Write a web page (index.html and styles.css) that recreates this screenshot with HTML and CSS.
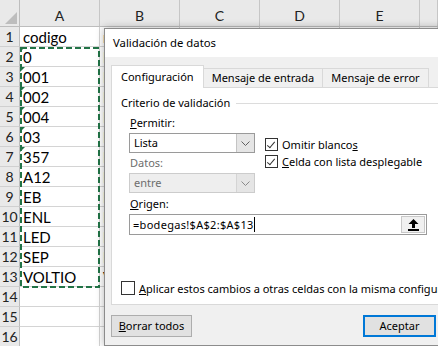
FILE: index.html
```html
<!DOCTYPE html>
<html lang="es">
<head>
    <meta charset="UTF-8">
    <title>Validación de datos</title>
    <link rel="stylesheet" href="styles.css">
</head>
<body>
    <div class="sheet">
        <div class="row head">
            <div class="rh corner">
                <svg width="20" height="27" viewBox="0 0 20 27"><polygon points="17,12 17,24 5,24" fill="#bdbdbd"/></svg>
            </div>
            <div class="ch">A</div>
            <div class="ch">B</div>
            <div class="ch">C</div>
            <div class="ch">D</div>
            <div class="ch">E</div>
            <div class="ch last"></div>
        </div>
        <div class="row"><div class="rh">1</div><div class="cell">codigo</div><div class="cell">nombre</div><div class="cell"></div><div class="cell"></div><div class="cell"></div><div class="cell last"></div></div>
        <div class="row"><div class="rh">2</div><div class="cell num">0</div><div class="cell">BODEGA GENERAL</div><div class="cell"></div><div class="cell"></div><div class="cell"></div><div class="cell last"></div></div>
        <div class="row"><div class="rh">3</div><div class="cell num">001</div><div class="cell">BODEGA 1</div><div class="cell"></div><div class="cell"></div><div class="cell"></div><div class="cell last"></div></div>
        <div class="row"><div class="rh">4</div><div class="cell num">002</div><div class="cell">BODEGA 2</div><div class="cell"></div><div class="cell"></div><div class="cell"></div><div class="cell last"></div></div>
        <div class="row"><div class="rh">5</div><div class="cell num">004</div><div class="cell">BODEGA 4</div><div class="cell"></div><div class="cell"></div><div class="cell"></div><div class="cell last"></div></div>
        <div class="row"><div class="rh">6</div><div class="cell num">03</div><div class="cell">BODEGA 3</div><div class="cell"></div><div class="cell"></div><div class="cell"></div><div class="cell last"></div></div>
        <div class="row"><div class="rh">7</div><div class="cell num">357</div><div class="cell">INVENTARIO</div><div class="cell"></div><div class="cell"></div><div class="cell"></div><div class="cell last"></div></div>
        <div class="row"><div class="rh">8</div><div class="cell">A12</div><div class="cell">LOCAL A12</div><div class="cell"></div><div class="cell"></div><div class="cell"></div><div class="cell last"></div></div>
        <div class="row"><div class="rh">9</div><div class="cell">EB</div><div class="cell">PLANTA EB</div><div class="cell"></div><div class="cell"></div><div class="cell"></div><div class="cell last"></div></div>
        <div class="row"><div class="rh">10</div><div class="cell">ENL</div><div class="cell">INTERNA ENL</div><div class="cell"></div><div class="cell"></div><div class="cell"></div><div class="cell last"></div></div>
        <div class="row"><div class="rh">11</div><div class="cell">LED</div><div class="cell">LED</div><div class="cell"></div><div class="cell"></div><div class="cell"></div><div class="cell last"></div></div>
        <div class="row"><div class="rh">12</div><div class="cell">SEP</div><div class="cell">DEVOLUCIONES</div><div class="cell"></div><div class="cell"></div><div class="cell"></div><div class="cell last"></div></div>
        <div class="row"><div class="rh">13</div><div class="cell">VOLTIO</div><div class="cell">VOLTIO</div><div class="cell"></div><div class="cell"></div><div class="cell"></div><div class="cell last"></div></div>
        <div class="row"><div class="rh">14</div><div class="cell"></div><div class="cell"></div><div class="cell"></div><div class="cell"></div><div class="cell"></div><div class="cell last"></div></div>
        <div class="row"><div class="rh">15</div><div class="cell"></div><div class="cell"></div><div class="cell"></div><div class="cell"></div><div class="cell"></div><div class="cell last"></div></div>
        <div class="row"><div class="rh">16</div><div class="cell"></div><div class="cell"></div><div class="cell"></div><div class="cell"></div><div class="cell"></div><div class="cell last"></div></div>

        <!-- copy marquee around A2:A13 -->
        <svg class="marquee" width="80" height="241" viewBox="0 0 80 241">
            <rect x="1" y="1" width="78" height="239" fill="none" stroke="#217346" stroke-width="2" stroke-dasharray="6 3"/>
        </svg>

        <div class="dialog">
            <div class="title">Validación de datos</div>
            <div class="body">
                <div class="tabs">
                    <div class="tab active">Configuración</div>
                    <div class="tab">Mensaje de entrada</div>
                    <div class="tab">Mensaje de error</div>
                </div>
                <div class="panel">
                    <div class="group-title"><span>Criterio de validación</span></div>
                    <div class="criteria">
                        <div class="fields">
                            <div class="label"><u>P</u>ermitir:</div>
                            <div class="select">
                                <div class="value">Lista</div>
                                <div class="arrow"><svg width="9" height="5" viewBox="0 0 9 5"><polyline points="0.5,0.5 4.5,4.5 8.5,0.5" fill="none" stroke="#606060"/></svg></div>
                            </div>
                            <div class="label disabled">Datos:</div>
                            <div class="select disabled">
                                <div class="value">entre</div>
                                <div class="arrow"><svg width="9" height="5" viewBox="0 0 9 5"><polyline points="0.5,0.5 4.5,4.5 8.5,0.5" fill="none" stroke="#8a8a8a"/></svg></div>
                            </div>
                        </div>
                        <div class="checks">
                            <div class="check"><span class="box checked"></span>Omitir blanco<u>s</u></div>
                            <div class="check"><span class="box checked"></span><u>C</u>elda con lista desplegable</div>
                        </div>
                    </div>
                    <div class="label origin"><u>O</u>rigen:</div>
                    <div class="source">
                        <div class="text">=bodegas!$A$2:$A$13<span class="caret"></span></div>
                        <div class="pick">
                            <svg width="11" height="12" viewBox="0 0 11 12">
                                <polygon points="5.5,0 10.5,5 7,5 7,9 4,9 4,5 0.5,5" fill="#000"/>
                                <rect x="0" y="10" width="11" height="2" fill="#000"/>
                            </svg>
                        </div>
                    </div>
                    <div class="check apply"><span class="box big"></span><u>A</u>plicar estos cambios a otras celdas con la misma configuración</div>
                </div>
                <div class="buttons">
                    <div class="btn"><u>B</u>orrar todos</div>
                    <div class="right">
                        <div class="btn default">Aceptar</div>
                        <div class="btn">Cancelar</div>
                    </div>
                </div>
            </div>
        </div>
    </div>
</body>
</html>
```

FILE: styles.css
```css
body {
    margin: 0;
    width: 438px;
    height: 346px;
    overflow: hidden;
    background: #fff;
}
.sheet {
    position: relative;
    font-family: Lato, 'Liberation Sans', sans-serif;
    font-size: 15px;
    color: #000;
}
.row {
    display: flex;
    height: 20px;
}
.row.head {
    height: 27px;
}
.rh {
    width: 20px;
    flex: none;
    box-sizing: border-box;
    background: #e9e9e9;
    border-right: 1px solid #bdbdbd;
    border-bottom: 1px solid #d0d0d0;
    text-align: center;
    font-size: 14px;
    line-height: 20px;
    color: #222;
}
.corner {
    border-bottom-color: #bdbdbd;
}
.corner svg {
    display: block;
}
.ch {
    width: 80px;
    flex: none;
    box-sizing: border-box;
    background: #e9e9e9;
    border-right: 1px solid #c6c6c6;
    border-bottom: 1px solid #bdbdbd;
    text-align: center;
    padding-top: 6px;
    line-height: 20px;
    font-size: 14px;
    color: #222;
}
.cell {
    width: 80px;
    flex: none;
    box-sizing: border-box;
    border-right: 1px solid #d4d4d4;
    border-bottom: 1px solid #d4d4d4;
    padding-left: 3px;
    line-height: 20px;
    white-space: nowrap;
    overflow: hidden;
    position: relative;
}
.ch.last, .cell.last {
    width: 18px;
}
.cell.num::before {
    content: "";
    position: absolute;
    left: 0;
    top: 0;
    border-top: 5px solid #1e7145;
    border-right: 5px solid transparent;
}
.marquee {
    position: absolute;
    left: 20px;
    top: 47px;
}

/* dialog */
.dialog {
    position: absolute;
    left: 104px;
    top: 28px;
    width: 418px;
    height: 318px;
    box-sizing: border-box;
    border: 1px solid #8c8c8c;
    background: #f0f0f0;
    box-shadow: 0 0 8px rgba(0,0,0,0.3);
    font-family: 'Noto Sans', 'Open Sans', sans-serif;
    font-size: 11px;
    color: #000;
    display: flex;
    flex-direction: column;
}
.title {
    height: 28px;
    background: #fff;
    line-height: 28px;
    padding-left: 8px;
    font-size: 11.3px;
}
.body {
    flex: 1;
    padding: 8px 6px 0 6px;
    display: flex;
    flex-direction: column;
}
.tabs {
    display: flex;
    align-items: flex-end;
    height: 22px;
}
.tab {
    height: 19px;
    line-height: 18px;
    padding: 0 8px;
    box-sizing: border-box;
    border: 1px solid #d9d9d9;
    border-bottom: none;
    border-left: none;
    background: #f0f0f0;
}
.tab.active {
    height: 23px;
    line-height: 22px;
    background: #fff;
    border-left: 1px solid #d9d9d9;
    margin-bottom: -1px;
    position: relative;
    padding: 0 9px;
}
.panel {
    height: 218px;
    box-sizing: border-box;
    border: 1px solid #d9d9d9;
    background: #fff;
    padding: 7px 0 8px 9px;
    display: flex;
    flex-direction: column;
}
.group-title {
    display: flex;
    align-items: center;
    line-height: 16px;
}
.group-title::after {
    content: "";
    flex: 1;
    height: 1px;
    background: #dcdcdc;
    margin-left: 6px;
}
.criteria {
    display: flex;
    gap: 10px;
    padding-left: 8px;
    margin-top: 2px;
}
.fields {
    width: 126px;
}
.label {
    line-height: 20px;
    padding-left: 1px;
}
.label.disabled {
    color: #6d6d6d;
}
.label.origin {
    padding-left: 9px;
    margin-top: 1px;
}
.select {
    display: flex;
    height: 20px;
    box-sizing: border-box;
    border: 1px solid #9a9a9a;
    background: #fff;
}
.select .value {
    flex: 1;
    padding-left: 4px;
    line-height: 18px;
}
.select .arrow {
    width: 17px;
    background: #e5e5e5;
    border-left: 1px solid #c4c4c4;
    display: flex;
    align-items: center;
    justify-content: center;
}
.select.disabled {
    border-color: #cccccc;
    background: #eeeeee;
    color: #6d6d6d;
}
.select.disabled .arrow {
    background: #e5e5e5;
    border-left-color: #d4d4d4;
}
.checks {
    padding-top: 23px;
}
.check {
    display: flex;
    align-items: center;
    height: 17px;
    white-space: nowrap;
}
.box {
    width: 13px;
    height: 13px;
    box-sizing: border-box;
    border: 1px solid #333;
    background: #fff;
    margin-right: 4px;
    flex: none;
    position: relative;
}
.box.checked::after {
    content: "";
    position: absolute;
    left: 3px;
    top: 1px;
    width: 3px;
    height: 7px;
    border-right: 1px solid #333;
    border-bottom: 1px solid #333;
    transform: rotate(40deg);
}
.box.big {
    width: 14px;
    height: 14px;
}
.source {
    margin-left: 8px;
    width: 298px;
    height: 21px;
    box-sizing: border-box;
    border: 1px solid #9a9a9a;
    display: flex;
}
.source .text {
    flex: 1;
    padding-left: 3px;
    line-height: 19px;
    letter-spacing: 0.3px;
}
.caret {
    display: inline-block;
    width: 1px;
    height: 15px;
    background: #000;
    vertical-align: -3px;
}
.pick {
    width: 22px;
    margin: 1px;
    background: #f0f0f0;
    border: 1px solid #c8c8c8;
    display: flex;
    align-items: center;
    justify-content: center;
}
.check.apply {
    margin-top: auto;
    height: 16px;
}
.buttons {
    display: flex;
    justify-content: space-between;
    margin-top: 10px;
}
.right {
    display: flex;
    gap: 6px;
}
.btn {
    width: 81px;
    height: 22px;
    box-sizing: border-box;
    border: 1px solid #adadad;
    background: #e1e1e1;
    text-align: center;
    line-height: 20px;
}
.btn.default {
    width: 73px;
    border: 2px solid #0078d7;
    line-height: 18px;
}
.right .btn {
    width: 73px;
}
```
